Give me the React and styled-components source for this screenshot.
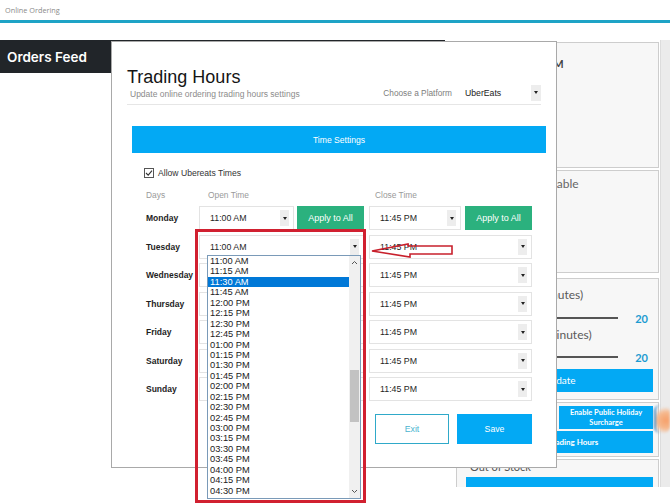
import React from "react";
import styled, { createGlobalStyle } from "styled-components";

const Global = createGlobalStyle`
  html, body { margin: 0; padding: 0; background: #fff; }
  body { width: 670px; height: 504px; overflow: hidden; font-family: "Liberation Sans", Arial, sans-serif; }
  * { box-sizing: border-box; }
`;

const Page = styled.div`
  position: relative;
  width: 670px;
  height: 504px;
  overflow: hidden;
  background: #fff;
`;

const TopBar = styled.header`
  height: 20px;
  display: flex;
  align-items: center;
  padding-left: 5px;
  font-family: "Open Sans", sans-serif;
  font-size: 7.3px;
  color: #8a8a8a;
`;

const Accent = styled.div`
  height: 3px;
  background: #1ea3c6;
`;

const Main = styled.div`
  margin-top: 17px;
  height: 447px;
  display: flex;
  overflow: hidden;
`;

const LeftCol = styled.div`
  width: 445px;
  flex: none;
`;

const FeedBar = styled.div`
  height: 33px;
  background: #212529;
  color: #fff;
  font-family: Inter, "Open Sans", sans-serif;
  font-weight: 600;
  font-size: 13.5px;
  display: flex;
  align-items: center;
  padding-left: 7px;
`;

const RightCol = styled.div`
  margin-left: 11px;
  width: 203px;
  flex: none;
  display: flex;
  flex-direction: column;
  font-family: Lato, "Open Sans", sans-serif;
`;

const ScrollStrip = styled.div`
  margin-left: auto;
  width: 10px;
  background: #ebebeb;
  border-left: 1px solid #dcdcdc;
`;

const Panel = styled.div`
  flex: none;
  height: ${(p) => p.$h}px;
  margin-top: ${(p) => p.$mt}px;
  border: 1px solid #cdcdcd;
  background: #f7f7f7;
  padding: ${(p) => p.$pt || 0}px 5px 0 9px;
  display: flex;
  flex-direction: column;
`;

const PanelText = styled.div`
  font-size: ${(p) => p.$size || 12}px;
  line-height: ${(p) => p.$lh || 14}px;
  font-weight: ${(p) => (p.$bold ? 700 : 400)};
  color: ${(p) => p.$color || "#5a5a5a"};
  padding-left: ${(p) => p.$pl || 0}px;
  margin-top: ${(p) => p.$mt || 0}px;
  white-space: nowrap;
`;

const SliderRow = styled.div`
  height: 16px;
  margin-top: ${(p) => p.$mt}px;
  display: flex;
  align-items: center;
  padding-right: 5px;
`;

const SliderTrack = styled.div`
  flex: 1;
  height: 2px;
  background: #555;
`;

const SliderValue = styled.div`
  width: 30px;
  text-align: right;
  font-size: 11px;
  font-weight: 700;
  color: #1d9bd1;
`;

const BlueButton = styled.div`
  height: ${(p) => p.$h}px;
  margin-top: ${(p) => p.$mt || 0}px;
  background: #03a9f4;
  color: #fff;
  font-size: ${(p) => p.$size || 10}px;
  font-weight: ${(p) => (p.$bold ? 700 : 400)};
  line-height: 1.3;
  display: flex;
  align-items: center;
  justify-content: center;
  text-align: center;
  white-space: nowrap;
`;

const ButtonGrid = styled.div`
  margin-top: 3px;
  display: grid;
  grid-template-columns: 1fr 94px;
  gap: 2px;
`;

const Blob = styled.div`
  position: absolute;
  left: 654px;
  top: 405px;
  width: 16px;
  height: 28px;
  border-radius: 6px;
  background: radial-gradient(circle at 70% 55%, #f6a06a 0%, #f5b98f 45%, rgba(255, 255, 255, 0) 75%);
  border-left: 2px solid #4d8fc4;
  filter: blur(0.8px);
`;

/* ---------- modal ---------- */

const Modal = styled.section`
  position: absolute;
  left: 111px;
  top: 41px;
  width: 446px;
  height: 427px;
  background: #fff;
  border: 1px solid #a9a9a9;
  z-index: 2;
`;

const ModalHeader = styled.div`
  margin: 24px 15px 0;
  padding-bottom: 4px;
  border-bottom: 1px solid #e6e6e6;
  display: flex;
  align-items: flex-end;
  justify-content: space-between;
`;

const Title = styled.h1`
  margin: 0;
  font-weight: 400;
  font-size: 18px;
  line-height: 22px;
  color: #151515;
`;

const Subtitle = styled.div`
  font-size: 8.5px;
  line-height: 12px;
  color: #8b8b8b;
  padding-left: 3px;
`;

const Platform = styled.div`
  display: flex;
  align-items: center;
  margin-bottom: -1px;
`;

const PlatformLabel = styled.span`
  font-size: 8.3px;
  color: #7d7d7d;
  margin-right: 13px;
`;

const PlatformSelect = styled.div`
  width: 76px;
  height: 17px;
  display: flex;
  align-items: center;
  justify-content: space-between;
  font-size: 8.7px;
  color: #222;
`;

const ArrowBox = styled.span`
  width: ${(p) => p.$w || 9}px;
  height: 16px;
  background: #ededed;
  display: flex;
  align-items: center;
  justify-content: center;
  &::after {
    content: "";
    border-left: 2px solid transparent;
    border-right: 2px solid transparent;
    border-top: 3px solid #222;
  }
`;

const TimeBar = styled.div`
  margin: 21px 10px 0 20px;
  height: 27px;
  background: #03a9f4;
  color: #fff;
  font-size: 8.6px;
  display: flex;
  align-items: center;
  justify-content: center;
`;

const Form = styled.div`
  padding-left: 34px;
`;

const CheckRow = styled.label`
  margin-top: 13px;
  margin-left: -2px;
  height: 14px;
  display: flex;
  align-items: center;
  gap: 4px;
  font-size: 8.6px;
  color: #333;
`;

const Grid = styled.div`
  display: grid;
  grid-template-columns: 48px 165px 163px;
  column-gap: 5px;
  row-gap: 4.5px;
  grid-auto-rows: ${(p) => p.$rh}px;
  margin-top: ${(p) => p.$mt}px;
`;

const HeadCell = styled.div`
  font-size: 8.4px;
  line-height: 12px;
  color: #9a9a9a;
  padding-left: ${(p) => p.$pl || 0}px;
`;

const DayLabel = styled.div`
  align-self: center;
  font-size: 8.5px;
  font-weight: 700;
  color: #1e1e1e;
  white-space: nowrap;
`;

const Cell = styled.div`
  display: flex;
  gap: ${(p) => p.$gap || 0}px;
`;

const Select = styled.div`
  position: relative;
  flex: 1;
  height: 24px;
  border: 1px solid #e3e3e3;
  background: #fff;
  padding: 0 4px 0 10px;
  display: flex;
  align-items: center;
  justify-content: space-between;
  font-size: 8.8px;
  color: #1f1f1f;
`;

const ApplyButton = styled.button`
  width: 67px;
  height: 24px;
  border: none;
  background: #2bb17e;
  color: #fff;
  font-family: inherit;
  font-size: 9px;
  padding: 0;
`;

const Footer = styled.div`
  margin-top: 13px;
  width: 386px;
  display: flex;
  justify-content: flex-end;
  gap: 8px;
`;

const FooterButton = styled.button`
  width: ${(p) => p.$w}px;
  height: 30px;
  font-family: inherit;
  font-size: 8.7px;
  padding: 0;
  border: 1px solid ${(p) => (p.$primary ? "#03a9f4" : "#2fa9c9")};
  background: ${(p) => (p.$primary ? "#03a9f4" : "#fff")};
  color: ${(p) => (p.$primary ? "#fff" : "#49b4cf")};
`;

/* ---------- open listbox ---------- */

const Listbox = styled.div`
  position: absolute;
  left: 7px;
  top: 19.5px;
  width: 154px;
  height: 244px;
  border: 1px solid #7a9ab8;
  background: #fff;
  display: flex;
  z-index: 5;
  overflow: hidden;
`;

const Options = styled.div`
  flex: 1;
  overflow: hidden;
`;

const Option = styled.div`
  height: 10.45px;
  line-height: 10.45px;
  padding-left: 2px;
  font-size: 9.3px;
  white-space: nowrap;
  color: ${(p) => (p.$selected ? "#fff" : "#222")};
  background: ${(p) => (p.$selected ? "#0078d7" : "transparent")};
`;

const Scrollbar = styled.div`
  width: 11px;
  flex: none;
  background: #f0f0f0;
  display: flex;
  flex-direction: column;
  align-items: center;
`;

const ScrollArrow = styled.svg`
  width: 7px;
  height: 5px;
  margin: ${(p) => p.$m};
  flex: none;
`;

const ScrollTrack = styled.div`
  flex: 1;
  width: 100%;
`;

const Thumb = styled.div`
  margin-top: 105px;
  width: 9px;
  margin-left: 1px;
  height: 52px;
  background: #c2c2c2;
`;

/* ---------- annotation ---------- */

const RedBox = styled.div`
  position: absolute;
  left: 195px;
  top: 229px;
  width: 171px;
  height: 274px;
  border: 3px solid #d12030;
  z-index: 10;
`;

const RedArrow = styled.svg`
  position: absolute;
  left: 368px;
  top: 238px;
  width: 90px;
  height: 24px;
  z-index: 10;
`;

const CheckBox = () => (
  <svg width="10" height="10" viewBox="0 0 10 10">
    <rect x="0.5" y="0.5" width="9" height="9" fill="#fff" stroke="#555" />
    <polyline points="2,5 4.2,7.2 8,2.6" fill="none" stroke="#333" strokeWidth="1.1" />
  </svg>
);

const days = ["Monday", "Tuesday", "Wednesday", "Thursday", "Friday", "Saturday", "Sunday"];

const options = (() => {
  const out = [];
  for (let m = 11 * 60; m <= 16 * 60 + 45; m += 15) {
    const h24 = Math.floor(m / 60);
    const mm = String(m % 60).padStart(2, "0");
    const ap = h24 >= 12 ? "PM" : "AM";
    const h12 = h24 > 12 ? h24 - 12 : h24;
    out.push(`${String(h12).padStart(2, "0")}:${mm} ${ap}`);
  }
  return out;
})();

export default function App() {
  return (
    <Page>
      <Global />
      <TopBar>Online Ordering</TopBar>
      <Accent />
      <Main>
        <LeftCol>
          <FeedBar>Orders Feed</FeedBar>
        </LeftCol>
        <RightCol>
          <Panel $h={126} $mt={2} $pt={14}>
            <PanelText $bold $size={11} $color="#444" $pl={2}>Opens at 11:00 AM</PanelText>
          </Panel>
          <Panel $h={103} $mt={2} $pt={6}>
            <PanelText $pl={2} $color="#666">Ordering Unavailable</PanelText>
          </Panel>
          <Panel $h={122} $mt={5} $pt={9}>
            <PanelText $pl={2}>Pickup Time (minutes)</PanelText>
            <SliderRow $mt={8}>
              <SliderTrack />
              <SliderValue>20</SliderValue>
            </SliderRow>
            <PanelText $pl={2} $mt={2}>Delivery Time (minutes)</PanelText>
            <SliderRow $mt={7}>
              <SliderTrack />
              <SliderValue>20</SliderValue>
            </SliderRow>
            <BlueButton $h={23} $mt={4}>Update</BlueButton>
          </Panel>
          <Panel $h={55} $mt={2} $pt={0}>
            <ButtonGrid>
              <BlueButton $h={23} $size={8} $bold>Pause Online Orders</BlueButton>
              <BlueButton $h={23} $size={7.5} $bold>
                Enable Public Holiday
                <br />
                Surcharge
              </BlueButton>
            </ButtonGrid>
            <BlueButton $h={22} $mt={2} $size={8} $bold>Update Trading Hours</BlueButton>
          </Panel>
          <Panel $h={60} $mt={2} $pt={0}>
            <PanelText $size={11} $lh={13} $pl={4} $color="#555">Out of Stock</PanelText>
            <BlueButton $h={24} $mt={4} />
          </Panel>
        </RightCol>
        <ScrollStrip />
      </Main>
      <Blob />

      <Modal>
        <ModalHeader>
          <div>
            <Title>Trading Hours</Title>
            <Subtitle>Update online ordering trading hours settings</Subtitle>
          </div>
          <Platform>
            <PlatformLabel>Choose a Platform</PlatformLabel>
            <PlatformSelect>
              UberEats
              <ArrowBox $w={10} />
            </PlatformSelect>
          </Platform>
        </ModalHeader>
        <TimeBar>Time Settings</TimeBar>
        <Form>
          <CheckRow>
            <CheckBox />
            Allow Ubereats Times
          </CheckRow>
          <Grid $rh={12} $mt={9}>
            <HeadCell>Days</HeadCell>
            <HeadCell $pl={9}>Open Time</HeadCell>
            <HeadCell $pl={6}>Close Time</HeadCell>
          </Grid>
          <Grid $rh={24} $mt={5}>
            {days.map((d, i) => (
              <React.Fragment key={d}>
                <DayLabel>{d}</DayLabel>
                <Cell $gap={3}>
                  <Select>
                    {i < 2 && "11:00 AM"}
                    {i < 2 && <ArrowBox />}
                    {i === 1 && (
                      <Listbox>
                        <Options>
                          {options.map((o) => (
                            <Option key={o} $selected={o === "11:30 AM"}>
                              {o}
                            </Option>
                          ))}
                        </Options>
                        <Scrollbar>
                          <ScrollArrow $m="4px 0 0" viewBox="0 0 7 5">
                            <polyline points="1,4 3.5,1.5 6,4" fill="none" stroke="#555" strokeWidth="1" />
                          </ScrollArrow>
                          <ScrollTrack>
                            <Thumb />
                          </ScrollTrack>
                          <ScrollArrow $m="0 0 4px" viewBox="0 0 7 5">
                            <polyline points="1,1 3.5,3.5 6,1" fill="none" stroke="#555" strokeWidth="1" />
                          </ScrollArrow>
                        </Scrollbar>
                      </Listbox>
                    )}
                  </Select>
                  {i === 0 && <ApplyButton>Apply to All</ApplyButton>}
                </Cell>
                <Cell $gap={4}>
                  <Select>
                    11:45 PM
                    <ArrowBox />
                  </Select>
                  {i === 0 && <ApplyButton>Apply to All</ApplyButton>}
                </Cell>
              </React.Fragment>
            ))}
          </Grid>
          <Footer>
            <FooterButton $w={74}>Exit</FooterButton>
            <FooterButton $w={75} $primary>Save</FooterButton>
          </Footer>
        </Form>
      </Modal>

      <RedBox />
      <RedArrow viewBox="0 0 90 24">
        <polygon
          points="4,13 40,6 40,8 84,8 84,16 42,16 42,19"
          fill="none"
          stroke="#c8202c"
          strokeWidth="1.6"
          strokeLinejoin="miter"
        />
      </RedArrow>
    </Page>
  );
}
